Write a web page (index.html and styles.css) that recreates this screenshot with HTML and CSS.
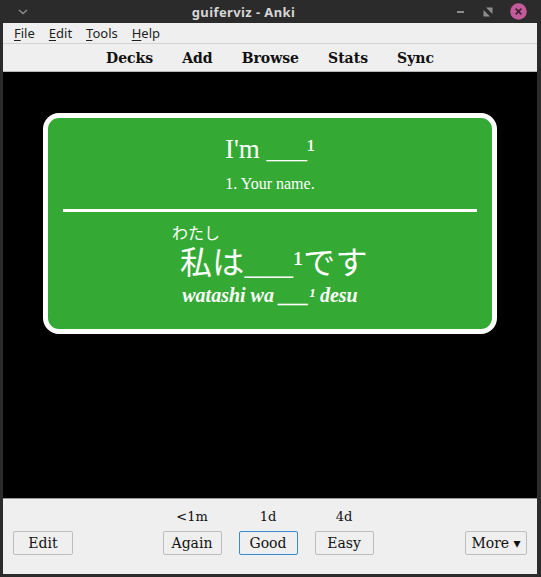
FILE: index.html
```html
<!DOCTYPE html>
<html>
<head>
<meta charset="utf-8">
<link rel="stylesheet" href="styles.css">
</head>
<body>
<div class="window">
  <div class="titlebar">
    <svg class="tb-menu" width="10" height="6" viewBox="0 0 10 6"><path d="M1 1 L5 4.5 L9 1" fill="none" stroke="#8a8a8a" stroke-width="1.6"/></svg>
    <div class="title">guiferviz - Anki</div>
    <div class="tb-buttons">
      <svg width="10" height="10" viewBox="0 0 10 10"><rect x="1" y="4" width="7" height="2" fill="#8c8c8c"/></svg>
      <svg width="10" height="10" viewBox="0 0 10 10"><path d="M3 0.5 L9.5 0.5 L9.5 7 Z" fill="#8c8c8c"/><path d="M0.5 3 L0.5 9.5 L7 9.5 Z" fill="#8c8c8c"/></svg>
      <svg width="17" height="17" viewBox="0 0 17 17"><circle cx="8.5" cy="8.5" r="8.3" fill="#c45a9b"/><path d="M5.7 5.7 L11.3 11.3 M11.3 5.7 L5.7 11.3" stroke="#3b2533" stroke-width="1.7"/></svg>
    </div>
  </div>
  <div class="frame">
    <div class="menubar">
      <span class="menu"><u>F</u>ile</span>
      <span class="menu"><u>E</u>dit</span>
      <span class="menu"><u>T</u>ools</span>
      <span class="menu"><u>H</u>elp</span>
    </div>
    <div class="toolbar">
      <span class="tlink">Decks</span>
      <span class="tlink">Add</span>
      <span class="tlink">Browse</span>
      <span class="tlink">Stats</span>
      <span class="tlink">Sync</span>
    </div>
    <div class="reviewer">
      <div class="card">
        <div class="front">I'm ___¹</div>
        <div class="hint">1. Your name.</div>
        <div class="rule"></div>
        <div class="jp"><ruby>私<rt>わたし</rt></ruby>は___¹です</div>
        <div class="romaji">watashi wa ___¹ desu</div>
      </div>
    </div>
    <div class="bottombar">
      <div class="side"><button class="btn">Edit</button></div>
      <div class="answers">
        <div class="ans"><span class="time">&lt;1m</span><button class="btn">Again</button></div>
        <div class="ans"><span class="time">1d</span><button class="btn focus">Good</button></div>
        <div class="ans"><span class="time">4d</span><button class="btn">Easy</button></div>
      </div>
      <div class="side right"><button class="btn more">More ▾</button></div>
    </div>
  </div>
</div>
</body>
</html>
```

FILE: styles.css
```css
* { box-sizing: border-box; }
html, body { margin: 0; padding: 0; }
body {
  width: 541px;
  height: 577px;
  background: #2b2b2b;
  overflow: hidden;
}
.window {
  width: 541px;
  height: 577px;
  display: flex;
  flex-direction: column;
}
.titlebar {
  height: 23px;
  background: #2b2b2b;
  display: flex;
  align-items: center;
  font-family: "Noto Sans", sans-serif;
}
.tb-menu { margin-left: 18px; }
.title {
  flex: 1;
  text-align: center;
  color: #d6d6d6;
  font-weight: bold;
  font-size: 13px;
  letter-spacing: 0.4px;
  padding-left: 3px;
}
.tb-buttons {
  display: flex;
  align-items: center;
  gap: 17px;
  margin-right: 14px;
}
.frame {
  flex: 1;
  display: flex;
  flex-direction: column;
  margin: 0 4px 3px 3px;
  background: #efefef;
}
.menubar {
  height: 21px;
  display: flex;
  align-items: center;
  padding-left: 4px;
  border-bottom: 1px solid #d2d2d2;
  font-family: "Noto Sans", sans-serif;
  font-size: 13px;
  color: #1e1e1e;
}
.menu { padding: 0 7px; line-height: 20px; }
.menu u { text-underline-offset: 2px; }
.toolbar {
  height: 28px;
  display: flex;
  justify-content: center;
  align-items: center;
  gap: 29px;
  border-bottom: 1px solid #b9b9b9;
  font-family: "DejaVu Serif", serif;
  font-weight: bold;
  font-size: 14px;
  color: #111;
  padding-top: 1px;
}
.reviewer {
  height: 426px;
  background: #000;
  padding: 41px 40px 0;
}
.card {
  background: #34aa34;
  border: 5px solid #fff;
  border-radius: 16px;
  color: #fff;
  text-align: center;
  padding: 15px 15px 0;
  height: 221px;
  font-family: "Liberation Serif", serif;
}
.front { font-size: 27px; line-height: 32px; }
.hint { font-size: 16px; line-height: 18px; margin-top: 10px; }
.rule { height: 3px; background: #fff; margin-top: 16px; }
.jp {
  font-family: "Liberation Serif", "Noto Sans CJK JP", serif;
  font-size: 32px;
  line-height: 36px;
  margin-top: 8px;
  letter-spacing: 0.3px;
}
.jp rt {
  font-family: "Noto Sans CJK JP", sans-serif;
  font-size: 16px;
  letter-spacing: 0;
  padding-bottom: 1px;
}
.romaji {
  font-size: 20px;
  font-weight: bold;
  font-style: italic;
  line-height: 22px;
  margin-top: 3px;
}
.bottombar {
  flex: 1;
  border-top: 1px solid #9a9a9a;
  display: grid;
  grid-template-columns: 1fr auto 1fr;
  align-items: end;
  padding: 0 10px 19px;
  font-family: "DejaVu Serif", serif;
}
.side { display: flex; }
.side.right { justify-content: flex-end; }
.answers { display: flex; gap: 17px; margin-right: 4px; }
.ans {
  display: flex;
  flex-direction: column;
  align-items: center;
  gap: 6px;
}
.time { font-size: 13px; color: #111; line-height: 16px; }
.btn {
  font-family: "DejaVu Serif", serif;
  font-size: 14px;
  color: #111;
  width: 59px;
  height: 24px;
  padding: 0;
  background: #efefef;
  border: 1px solid #bdbdbd;
  border-radius: 2px;
}
.btn.focus { border-color: #3b8bd4; }
.btn.more { width: 62px; }
.side .btn:not(.more) { width: 60px; }
```
